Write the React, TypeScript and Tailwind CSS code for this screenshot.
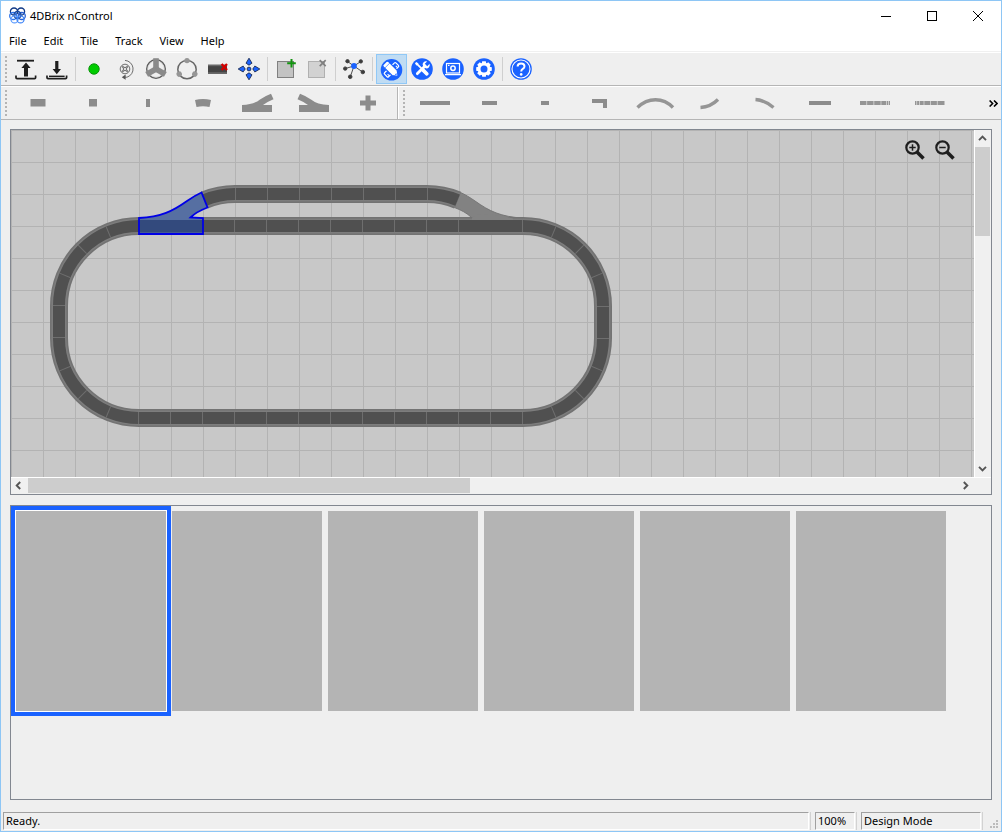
import type { ReactNode } from 'react'

interface ToolItem {
  label: string
  icon: ReactNode
  active?: boolean
}

const menus = ['File', 'Edit', 'Tile', 'Track', 'View', 'Help']

const spin = [0, 120, 240]
const quarter = [0, 90, 180, 270]
const eighth = [0, 45, 90, 135, 180, 225, 270, 315]

const toolGroups: ToolItem[][] = [
  [
    {
      label: 'Open layout',
      icon: (
        <g fill="#1e1e1e">
          <rect x="3" y="2.8" width="17" height="1.8" />
          <path d="M12 5.6 16.6 11H14v8.4h-4V11H7.4z" />
          <path d="M2 18.6v2.2q0 .9 1 .9h17.6q1 0 1-.9v-2.2" fill="none" stroke="#1e1e1e" strokeWidth="1.7" />
        </g>
      ),
    },
    {
      label: 'Save layout',
      icon: (
        <g fill="#1e1e1e">
          <path d="M11.8 17.2 7.6 12h2.6V4h3.2v8H16z" />
          <path d="M4 19.3h15.6" stroke="#1e1e1e" strokeWidth="1.4" />
          <path d="M2 18.6v2.2q0 .9 1 .9h17.6q1 0 1-.9v-2.2" fill="none" stroke="#1e1e1e" strokeWidth="1.7" />
        </g>
      ),
    },
  ],
  [
    {
      label: 'Connect',
      icon: <circle cx="12" cy="12" r="5.2" fill="#00cc00" stroke="#0b960b" />,
    },
    {
      label: 'Rotate part',
      icon: (
        <g fill="none" stroke="#6e6e6e">
          <circle cx="12" cy="12" r="4.8" />
          <circle cx="12" cy="12" r="1.6" />
          {quarter.map((a) => (
            <circle key={a} cx="12" cy="9" r="1" fill="#8a8a8a" strokeWidth=".5" transform={`rotate(${a + 45} 12 12)`} />
          ))}
          <path d="M12 3.4a8.6 8.6 0 0 1 2 16.8H11" />
          <path d="M12.6 17.6v5.2l-3.8-2.6z" fill="#555" stroke="none" />
        </g>
      ),
    },
    {
      label: 'Turntable',
      icon: (
        <g>
          <circle cx="12" cy="12" r="9.2" fill="none" stroke="#5c5c5c" strokeWidth="1.6" />
          <circle cx="12" cy="12" r="8.2" fill="none" stroke="#d6d6d6" strokeWidth=".8" />
          {spin.map((a) => (
            <path key={a} d="M12 12V1.2" stroke="#8a8a8a" strokeWidth="5.6" transform={`rotate(${a} 12 12)`} />
          ))}
        </g>
      ),
    },
    {
      label: 'Loop',
      icon: (
        <g>
          <circle cx="12" cy="12.6" r="9.2" fill="none" stroke="#666" strokeWidth="1.5" />
          {spin.map((a) => (
            <circle key={a} cx="12" cy="3.6" r="2.7" fill="#969696" transform={`rotate(${a} 12 12.6)`} />
          ))}
        </g>
      ),
    },
    {
      label: 'Remove track',
      icon: (
        <g>
          <rect x="2" y="7.5" width="19" height="9.5" fill="#686868" />
          <rect x="2" y="9.2" width="19" height="6" fill="#444" />
          <path d="m15.6 7 5.4 6m0-6-5.4 6" stroke="#d40000" strokeWidth="2.3" />
        </g>
      ),
    },
    {
      label: 'Move',
      icon: (
        <g fill="#1a62ff" stroke="#1c2c55" strokeWidth=".9">
          {quarter.map((a) => (
            <path key={a} d="M12 1.2 15 6.2q-1.4 0-2.2 1.8h-1.6Q10.4 6.2 9 6.2z" transform={`rotate(${a} 12 12)`} />
          ))}
          <circle cx="12" cy="12" r="1.9" />
        </g>
      ),
    },
  ],
  [
    {
      label: 'Add tile',
      icon: (
        <g>
          <rect x="3.5" y="4.5" width="16" height="16" fill="#c3c3c3" stroke="#808080" />
          <path d="M17.5 2v8.5M13.2 6.3h8.6" stroke="#12930f" strokeWidth="2" />
        </g>
      ),
    },
    {
      label: 'Delete tile',
      icon: (
        <g>
          <rect x="3.5" y="4.5" width="16" height="16" fill="#d2d2d2" stroke="#b0b0b0" />
          <path d="m14.7 3.2 6 6m0-6-6 6" stroke="#808080" strokeWidth="1.7" />
        </g>
      ),
    },
  ],
  [
    {
      label: 'Network',
      icon: (
        <g fill="#3c3c3c" stroke="#3c3c3c" strokeWidth=".9">
          <path d="M12 9 5.5 4.5M12 9l6.8-4.5M12 9l-9 2.6M12 9 8.2 20M12 9l8.6 6" />
          <circle cx="5.5" cy="4.2" r="1.7" />
          <circle cx="18.8" cy="4.4" r="1.7" />
          <circle cx="3.2" cy="11.6" r="1.7" />
          <circle cx="8.2" cy="19.8" r="1.8" />
          <circle cx="20.8" cy="15" r="1.8" />
          <circle cx="12" cy="9" r="2.9" fill="#1a62ff" stroke="none" />
        </g>
      ),
    },
  ],
  [
    {
      label: 'Design mode',
      active: true,
      icon: (
        <g>
          <circle cx="12.5" cy="12.8" r="10.8" fill="#1a62ff" />
          <g transform="rotate(45 12.5 12.8)" fill="none" stroke="#fff">
            <rect x="9.7" y="4.8" width="5.6" height="16" rx="1" strokeWidth="1.2" />
            <path d="M12.8 7h2.5M12.8 18.6h2.5" strokeWidth="1" />
          </g>
          <g transform="rotate(-45 12.5 12.8)">
            <path d="M8.8 5q0-1.800 1.600-1.800h4.200q1.600 0 1.600 1.800v12.200l-3.700 5-3.700-5z" fill="#fff" stroke="#1a62ff" strokeWidth="1.2" />
            <path d="M9 6.8h7" stroke="#1a62ff" strokeWidth=".6" />
            <path d="M11.400 18.600h2.200l-1.100 1.500z" fill="#1a62ff" />
          </g>
        </g>
      ),
    },
    {
      label: 'Configuration mode',
      icon: (
        <g>
          <circle cx="12" cy="12" r="10.8" fill="#1a62ff" />
          <g transform="rotate(45 12 12)" fill="#fff">
            <path d="M10.3 3v3.3h3.4V3q2 1 2 3.1 0 2.3-2.3 3v9.4q0 1.5-1.4 1.5t-1.4-1.5V9.1q-2.3-.7-2.3-3 0-2.1 2-3.1z" />
          </g>
          <g transform="rotate(-45 12 12)" fill="#fff">
            <path d="M10.9 12.5h2.2v6.5q0 .9-1.1.9t-1.1-.9z" strokeWidth="1.4" stroke="#fff" />
            <path d="M11.1 3h1.8l.6 2.2-.6 1V13h-1.8V6.2l-.6-1z" />
          </g>
        </g>
      ),
    },
    {
      label: 'Monitor mode',
      icon: (
        <g>
          <circle cx="12" cy="12" r="10.8" fill="#1a62ff" />
          <rect x="5.5" y="6.5" width="13" height="9.5" fill="none" stroke="#fff" strokeWidth="1.2" />
          <circle cx="12" cy="11.2" r="2.2" fill="none" stroke="#fff" strokeWidth="1.5" />
          <path d="M7 8.3h1.5M4 17.7h16" stroke="#fff" strokeWidth="1.2" />
        </g>
      ),
    },
    {
      label: 'Control mode',
      icon: (
        <g>
          <circle cx="12" cy="12" r="10.8" fill="#1a62ff" />
          {eighth.map((a) => (
            <path key={a} d="M10.2 4.2h3.6l.6 3.4H9.6z" fill="#fff" transform={`rotate(${a} 12 12)`} />
          ))}
          <circle cx="12" cy="12" r="4.9" fill="none" stroke="#fff" strokeWidth="2.8" />
        </g>
      ),
    },
  ],
  [
    {
      label: 'Help',
      icon: (
        <g fill="none">
          <circle cx="12" cy="12" r="10.8" fill="#1a62ff" />
          <circle cx="12" cy="12" r="9" stroke="#fff" strokeWidth="1.1" />
          <path d="M8.6 9.6q0-3.200 3.500-3.200 3.400 0 3.400 2.900 0 1.600-1.700 2.600-1.600.9-1.600 2.500" stroke="#fff" strokeWidth="2" />
          <circle cx="12.2" cy="17.4" r="1.3" fill="#fff" />
        </g>
      ),
    },
  ],
]

const trackParts: ToolItem[] = [
  { label: 'Straight', icon: <rect x="20.5" y="12" width="15" height="7.5" /> },
  { label: 'Half straight', icon: <rect x="24" y="12" width="8" height="7.5" /> },
  { label: 'Quarter straight', icon: <rect x="26" y="12" width="4" height="8" /> },
  { label: 'Curve', icon: <path d="M20 13q8-2 16 0L34.5 20q-6.5-1.5-13 0z" /> },
  { label: 'Left switch', icon: <path d="M12 18Q24 17.5 30 12.5 36 8.5 41 6.7L43.5 12.3Q38 14.5 33 18H42V25H12z" /> },
  { label: 'Right switch', icon: <path d="M44 18Q32 17.5 26 12.5 20 8.5 15 6.7L12.5 12.3Q18 14.5 23 18H14V25H44z" /> },
  { label: 'Crossing', icon: <path d="M25.5 8.5h5v5H36v5h-5.5v5h-5v-5H20v-5h5.5z" /> },
]

const wallParts: ToolItem[] = [
  { label: 'Long wall', icon: <rect x="12" y="14" width="30" height="4" /> },
  { label: 'Wall', icon: <rect x="19" y="14" width="15" height="4" /> },
  { label: 'Short wall', icon: <rect x="23" y="14" width="8" height="4" /> },
  { label: 'Corner wall', icon: <path d="M19 12h15v9h-4v-5H19z" /> },
  { label: 'Wide arc', icon: <path d="M9.5 20.5q8-7.8 18-7.8t17.5 7.8" fill="none" stroke="#959595" strokeWidth="3.4" /> },
  { label: 'Left arc', icon: <path d="M17.5 20.5q10-.5 17.5-8" fill="none" stroke="#959595" strokeWidth="3.4" /> },
  { label: 'Right arc', icon: <path d="M17.5 12.5q9 .5 18 8" fill="none" stroke="#959595" strokeWidth="3.4" /> },
  { label: 'Bar', icon: <rect x="16" y="14" width="22" height="4" /> },
  {
    label: 'Fence',
    icon: <path d="M12 16h30" stroke="#959595" strokeWidth="4" strokeDasharray="6.5 .6 6.5 .6 6.5 .6 5 .6 1.5 .6" />,
  },
  {
    label: 'Fence end',
    icon: <path d="M12 16h30" stroke="#959595" strokeWidth="4" strokeDasharray="1.5 .6 2 .6 4 .6 6 .6 6 .6 7 .6" />,
  },
]

const tiles = [1, 2, 3, 4, 5, 6]

const mainLoop = 'M128 96H512A80 80 0 0 1 592 176V208A80 80 0 0 1 512 288H128A80 80 0 0 1 48 208V176A80 80 0 0 1 128 96Z'
const siding = 'M193.4 70.1A80 80 0 0 1 224 64H416A80 80 0 0 1 446.6 70.1'
const switchShape =
  'M128 88C150 87 162 81 176 71C181 67.5 186 64.5 190.5 62.5L196.5 77.5C190 80 184 83 179.5 87.5L192 88V104H128Z'

const topSeams = [192, 224, 256, 288, 320, 352, 384, 416, 448, 512]
const bottomSeams = [128, 160, 192, 224, 256, 288, 320, 352, 384, 416, 448, 480, 512]
const sidingSeams = [224, 256, 288, 320, 352, 384, 416]

// Joints sit every 22.5 degrees round the four corner curves
const corners = [
  { cx: 128, cy: 176, from: 180 },
  { cx: 512, cy: 176, from: 270 },
  { cx: 512, cy: 208, from: 0 },
  { cx: 128, cy: 208, from: 90 },
]

function Logo() {
  return (
    <svg width="17" height="17" viewBox="0 0 17 17" fill="none" strokeWidth="1.3" aria-hidden="true">
      <circle cx="5" cy="4.6" r="3.6" stroke="#123a86" />
      <circle cx="12" cy="4.6" r="3.6" stroke="#123a86" />
      <circle cx="4.2" cy="9" r="3.5" stroke="#2f74e8" />
      <circle cx="12.8" cy="9" r="3.5" stroke="#2a62d4" />
      <circle cx="8.5" cy="8" r="3.5" stroke="#17479f" />
      <circle cx="5.5" cy="12.4" r="3.5" stroke="#5b9bff" />
      <circle cx="11.5" cy="12.4" r="3.5" stroke="#3d84f7" />
    </svg>
  )
}

function Grip() {
  return (
    <div className="w-[2px] h-[26px] shrink-0 bg-[linear-gradient(#b4b4b4_2px,transparent_2px)] bg-[size:2px_4px]" />
  )
}

function PartBar({ label, parts, className }: { label: string; parts: ToolItem[]; className: string }) {
  return (
    <div role="toolbar" aria-label={label} className={`flex items-center pl-1 ${className}`}>
      <Grip />
      <div className="flex pl-[3px]">
        {parts.map((part) => (
          <button key={part.label} type="button" aria-label={part.label} className="w-[55px] h-8">
            <svg width="55" height="32" viewBox="0 0 55 32" fill="#8c8c8c" aria-hidden="true">
              {part.icon}
            </svg>
          </button>
        ))}
      </div>
    </div>
  )
}

function ScrollArrow({ label, turn }: { label: string; turn: number }) {
  return (
    <button type="button" aria-label={label} className="flex w-[15px] h-[15px] shrink-0 items-center justify-center">
      <svg width="9" height="9" viewBox="0 0 9 9" aria-hidden="true">
        <path d="M1 6.2 4.5 2.7 8 6.2" fill="none" stroke="#555" strokeWidth="1.9" transform={`rotate(${turn} 4.5 4.5)`} />
      </svg>
    </button>
  )
}

function TrackPlan() {
  return (
    <svg width="640" height="320" viewBox="0 0 640 320" fill="none" role="img" aria-label="Track plan">
      <path d={switchShape} fill="#828282" stroke="#767676" transform="matrix(-1 0 0 1 640 0)" />
      {[siding, mainLoop].map((d) => (
        <g key={d}>
          <path d={d} stroke="#737373" strokeWidth="18" />
          <path d={d} stroke="#7d7d7d" strokeWidth="15" />
          <path d={d} stroke="#505050" strokeWidth="12" />
        </g>
      ))}
      <path d="M461 87.5 468 84 490 85.5 502 88.5V90H461Z" fill="#828282" />
      <g stroke="#6e6e6e" strokeWidth="1">
        {topSeams.map((x) => (
          <path key={x} d={`M${x - 0.5} 90v12`} />
        ))}
        {bottomSeams.map((x) => (
          <path key={x} d={`M${x - 0.5} 282v12`} />
        ))}
        {sidingSeams.map((x) => (
          <path key={x} d={`M${x + 0.5} 58v12`} />
        ))}
        <path d="M42 175.5h12M42 207.5h12M586 176.5h12M586 208.5h12" />
        {corners.map((c) =>
          [22.5, 45, 67.5].map((step) => (
            <path
              key={`${c.from}-${step}`}
              d={`M${c.cx + 74} ${c.cy}h12`}
              transform={`rotate(${c.from + step} ${c.cx} ${c.cy})`}
            />
          )),
        )}
      </g>
      {/* Selected switch */}
      <path d={switchShape} fill="#566fa2" />
      <path d="M128 90h64v12.5h-64z" fill="#334a7d" />
      <path d={switchShape} stroke="#0000e6" strokeWidth="1.8" />
    </svg>
  )
}

function ZoomIcon({ plus }: { plus?: boolean }) {
  return (
    <svg width="20" height="20" viewBox="0 0 20 20" fill="none" stroke="#1e1e1e" aria-hidden="true">
      <circle cx="7.5" cy="7.5" r="6.2" strokeWidth="2.2" />
      <path d="m12 12 6.5 6.5" strokeWidth="3.6" />
      <path d="M4.3 7.5h6.4" strokeWidth="1.5" />
      {plus && <path d="M7.5 4.3v6.4" strokeWidth="1.5" />}
    </svg>
  )
}

function StatusCell({ children, className }: { children: ReactNode; className: string }) {
  return (
    <div className={`flex pr-1 ${className}`}>
      <div className="flex flex-1 items-center h-[18px] pl-[2px] mr-[1px] border border-t-[#a0a0a0] border-l-[#a0a0a0] border-b-white border-r-white whitespace-nowrap">
        {children}
      </div>
      <div className="w-[1px] h-[18px] bg-[#d2d2d2]" />
    </div>
  )
}

export default function App() {
  return (
    <div className="flex flex-col min-h-screen border border-[#8ec6f5] bg-[#efefef] text-black text-[11px] leading-4 font-['Noto_Sans','Open_Sans',sans-serif]">
      {/* Title bar */}
      <header className="flex h-[29px] items-center bg-white pl-2">
        <Logo />
        <h1 className="flex-1 pl-1">4DBrix nControl</h1>
        <div className="flex h-full">
          <button type="button" aria-label="Minimize" className="flex w-[46px] items-center justify-center">
            <svg width="10" height="10" viewBox="0 0 10 10" aria-hidden="true"><path d="M0 5.5h10" stroke="#000" /></svg>
          </button>
          <button type="button" aria-label="Maximize" className="flex w-[46px] items-center justify-center">
            <svg width="10" height="10" viewBox="0 0 10 10" aria-hidden="true"><rect x=".5" y=".5" width="9" height="9" fill="none" stroke="#000" /></svg>
          </button>
          <button type="button" aria-label="Close" className="flex w-[46px] items-center justify-center">
            <svg width="10" height="10" viewBox="0 0 10 10" aria-hidden="true"><path d="m0 0 10 10m0-10L0 10" stroke="#000" /></svg>
          </button>
        </div>
      </header>

      <nav className="flex h-[21px] items-center gap-[1px] bg-white">
        {menus.map((menu) => (
          <button key={menu} type="button" className="px-2">{menu}</button>
        ))}
      </nav>

      {/* Main toolbar */}
      <div role="toolbar" aria-label="Main" className="flex h-[35px] items-center border-t border-t-[#f0f0f0] border-b border-b-[#b5b5b5] pl-1 shadow-[inset_0_1px_0_#fff]">
        <Grip />
        <div className="flex pl-1">
          {toolGroups.map((group, i) => (
            <div key={i} className="flex items-center">
              {i > 0 && <div className="w-[1px] h-6 ml-[2px] mr-[3px] bg-[#cfcfcf]" />}
              {group.map((tool) => (
                <button
                  key={tool.label}
                  type="button"
                  aria-label={tool.label}
                  aria-pressed={tool.active}
                  className={
                    tool.active
                      ? 'flex w-[31px] h-[30px] items-center pl-[2px] border border-[#90c8f6] bg-[#c0dcf3]'
                      : 'flex w-[31px] h-[30px] items-center pl-[3px]'
                  }
                >
                  <svg width="24" height="24" viewBox="0 0 24 24" aria-hidden="true">{tool.icon}</svg>
                </button>
              ))}
            </div>
          ))}
        </div>
      </div>

      {/* Parts toolbars */}
      <div className="flex h-[34px] border-t border-t-white border-b border-b-[#b5b5b5]">
        <PartBar label="Tracks" parts={trackParts} className="w-[397px] shrink-0 border-r border-r-[#b5b5b5]" />
        <PartBar label="Walls" parts={wallParts} className="flex-1 min-w-0 overflow-hidden border-l border-l-white" />
        <button type="button" aria-label="More parts" className="flex w-4 shrink-0 items-center justify-center">
          <svg width="9" height="7" viewBox="0 0 9 7" fill="none" stroke="#000" strokeWidth="1.6" aria-hidden="true">
            <path d="m.6.5 3 3-3 3M5 .5l3 3-3 3" />
          </svg>
        </button>
      </div>

      <main className="flex flex-1 flex-col gap-[10px] px-[9px] pt-[9px] pb-3">
        <section aria-label="Layout" className="flex flex-1 flex-col border border-[#828790]">
          <div className="flex flex-1">
            <div className="relative flex-1 min-w-0 overflow-hidden bg-[#c8c8c8] bg-[linear-gradient(#b3b3b3_1px,transparent_1px),linear-gradient(90deg,#b3b3b3_1px,transparent_1px)] bg-[size:32px_32px]">
              <TrackPlan />
              <div className="absolute top-[10px] right-[19px] flex gap-[10px]">
                <button type="button" aria-label="Zoom in"><ZoomIcon plus /></button>
                <button type="button" aria-label="Zoom out"><ZoomIcon /></button>
              </div>
            </div>
            <div className="flex w-[17px] flex-col border-l border-white pt-[1px] pr-[1px] pb-[1px] bg-[#f0f0f0]">
              <ScrollArrow label="Scroll up" turn={0} />
              <div className="flex-1 pt-[1px]">
                <div className="h-[89px] bg-[#cdcdcd]" />
              </div>
              <ScrollArrow label="Scroll down" turn={180} />
            </div>
          </div>
          <div className="flex h-[17px] border-t border-white bg-[#f0f0f0] pr-[18px]">
            <ScrollArrow label="Scroll left" turn={270} />
            <div className="flex-1 pl-[2px]">
              <div className="w-[442px] h-[15px] bg-[#cdcdcd]" />
            </div>
            <ScrollArrow label="Scroll right" turn={90} />
          </div>
        </section>

        <section aria-label="Tiles" className="flex h-[295px] gap-[6px] overflow-hidden border border-[#828790] p-[5px]">
          {tiles.map((tile) => (
            <button
              key={tile}
              type="button"
              aria-label={`Tile ${tile}`}
              className={
                tile === 1
                  ? 'w-[150px] h-[200px] shrink-0 bg-[#b4b4b4] ring-1 ring-white outline-4 outline-offset-1 outline-[#1a62ff]'
                  : 'w-[150px] h-[200px] shrink-0 bg-[#b4b4b4]'
              }
            />
          ))}
        </section>
      </main>

      {/* Status bar */}
      <footer className="flex h-[19px] items-start pl-[2px]">
        <StatusCell className="flex-1">Ready.</StatusCell>
        <StatusCell className="w-[46px]">100%</StatusCell>
        <StatusCell className="w-[126px]">Design Mode</StatusCell>
        <svg width="14" height="19" viewBox="0 0 14 19" fill="#bcbcbc" aria-hidden="true">
          <path d="M9 8h2v2H9zM6 11h2v2H6zM9 11h2v2H9zM3 14h2v2H3zM6 14h2v2H6zM9 14h2v2H9z" />
        </svg>
      </footer>
    </div>
  )
}
